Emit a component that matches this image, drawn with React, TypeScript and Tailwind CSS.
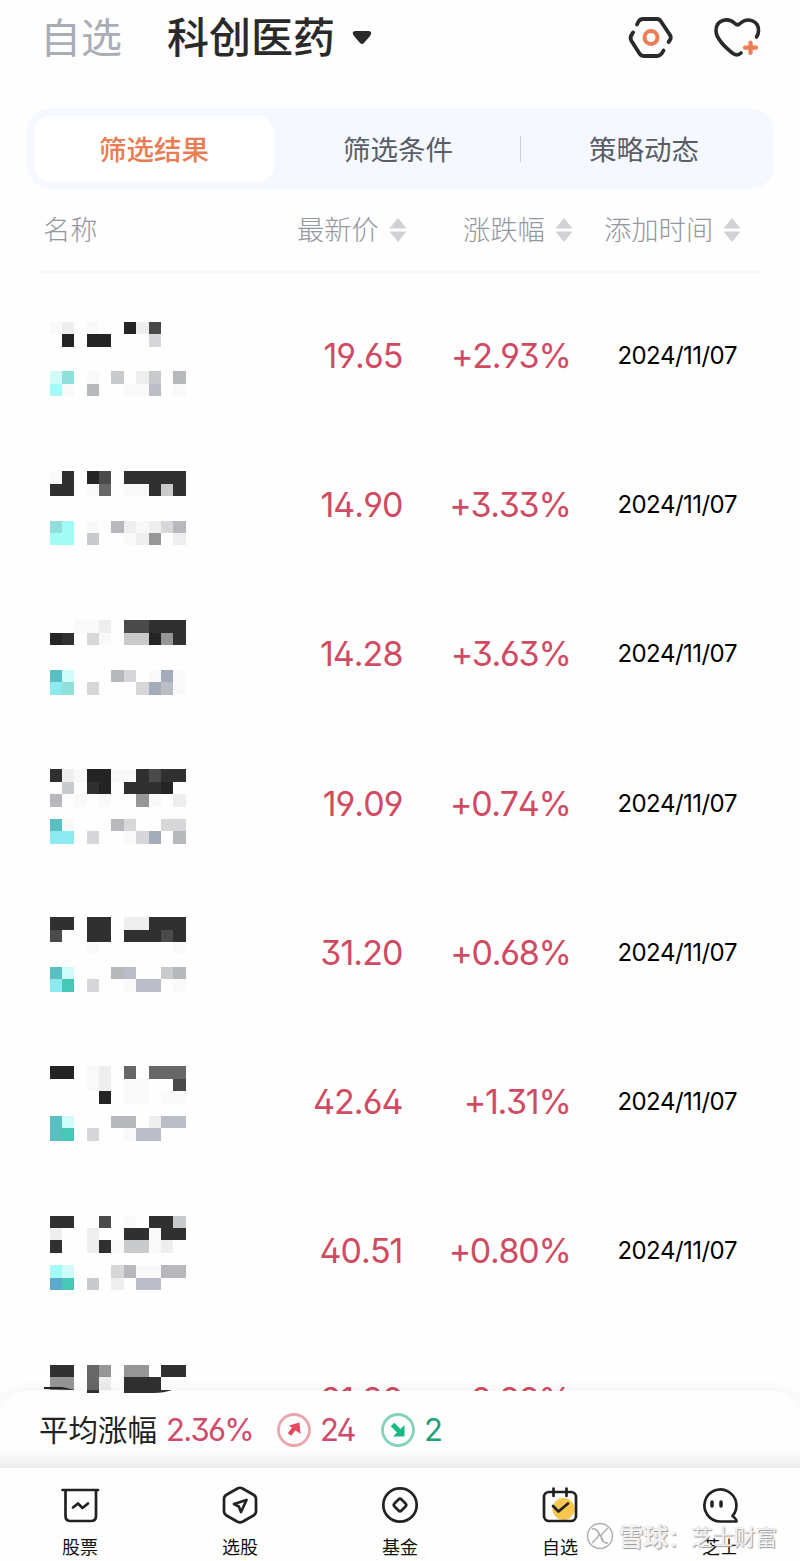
import type { ReactNode } from 'react';
import clsx from 'clsx';

interface Stock {
  price: string;
  change: string;
  date: string;
  mosaic: string[];
}

const shades: Record<string, string> = {
  k: 'bg-[#242424]',
  d: 'bg-[#303030]',
  g: 'bg-[#4a4a4a]',
  G: 'bg-[#676767]',
  m: 'bg-[#969696]',
  s: 'bg-[#b7b8bb]',
  S: 'bg-[#c9cacb]',
  l: 'bg-[#d7d7da]',
  w: 'bg-[#eeeeee]',
  f: 'bg-[#f9f9f9]',
  a: 'bg-[#a3fbf6]',
  A: 'bg-[#d0fbf8]',
  t: 'bg-[#59bfc0]',
  T: 'bg-[#8fdfda]',
  c: 'bg-[#8bebf0]',
  b: 'bg-[#a4abb9]',
  B: 'bg-[#bbbdc6]',
  v: 'bg-[#45c9b6]',
  u: 'bg-[#5cabcf]',
};

const stocks: Stock[] = [
  {
    price: '19.65',
    change: '+2.93%',
    date: '2024/11/07',
    mosaic: ['fw.f..kwg..', '.k.kk...l..', '...........', '...........', 'AT.f.S.wS.s', 'af.s..ffB.f'],
  },
  {
    price: '14.90',
    change: '+3.33%',
    date: '2024/11/07',
    mosaic: ['fd.kg.ddddd', 'dd.fG.ffdSd', '...........', '...........', 'Ta.f.swfwls', 'aa.S..fwm.w'],
  },
  {
    price: '14.28',
    change: '+3.63%',
    date: '2024/11/07',
    mosaic: ['..ffw.ggddd', 'kd.lf.SSkmd', '...........', '...........', 'tA...sl.fbf', 'cT.l...lbBf'],
  },
  {
    price: '19.09',
    change: '+0.74%',
    date: '2024/11/07',
    mosaic: ['dwfkkffdgdd', '.S.dk.dddk.', 's.f.f..mf.w', '...........', 'tf...sl..ll', 'cc.l..flb.s'],
  },
  {
    price: '31.20',
    change: '+0.68%',
    date: '2024/11/07',
    mosaic: ['dd.dd.wwddd', 'g..dd.dddgd', '...f......f', '...........', 'tA...sB..Ss', 'cv.l..fBB.f'],
  },
  {
    price: '42.64',
    change: '+1.31%',
    date: '2024/11/07',
    mosaic: ['kk.fw.G.GGG', '...fw.ff..g', '....k.ff.ff', '...........', 'tA...ss.wBB', 'tv.l..fBB..'],
  },
  {
    price: '40.51',
    change: '+0.80%',
    date: '2024/11/07',
    mosaic: ['dd..g.f.ddS', 'w..w..ddfdd', 'd..wdfSSfw.', '...........', 'aA...lsffss', 'uv.S.w.BB..'],
  },
  {
    price: '21.80',
    change: '+2.88%',
    date: '',
    mosaic: ['dd.Gm.mm.dd', 'mm.Gw.ddd..', '...d..ddd..', '...........', '...........', '...........'],
  },
];

function SortIcon() {
  return (
    <svg width="18" height="26" viewBox="0 0 18 26" className="shrink-0" fill="#d0d1d5">
      <path d="M9 1 17.5 11.5H.5z" />
      <path d="M9 25 .5 14.5h17z" />
    </svg>
  );
}

function Mosaic({ rows }: { rows: string[] }) {
  return (
    <div className="grid grid-cols-[repeat(11,12.4px)] auto-rows-[12.4px]">
      {rows.join('').split('').map((cell, i) => (
        <span key={i} className={shades[cell]} />
      ))}
    </div>
  );
}

function StockRow({ stock, lower }: { stock: Stock; lower: boolean }) {
  return (
    <div className="flex h-[149.2px] shrink-0 items-center pl-[49.5px] font-['Inter',sans-serif] [font-kerning:none]">
      <div className={clsx('w-[137px]', lower ? 'mt-[3px]' : 'mt-[6px]')}>
        <Mosaic rows={stock.mosaic} />
      </div>
      <div className="w-[216px] text-right text-[34px] leading-10 [font-weight:370] tracking-[-0.028em] text-[#d04b62] [font-feature-settings:'ss01','cv03','cv04']">
        {stock.price}
      </div>
      <div className="w-[168px] text-right text-[34px] leading-10 [font-weight:370] tracking-[-0.038em] text-[#d04b62] [font-feature-settings:'ss01','cv03','cv04']">
        {stock.change}
      </div>
      <div className="ml-[47px] text-2xl tracking-[-0.025em] text-black">{stock.date}</div>
    </div>
  );
}

function NavItem({ label, children }: { label: string; children: ReactNode }) {
  return (
    <button className="flex flex-1 flex-col items-center">
      <svg
        width="40"
        height="40"
        viewBox="0 0 40 40"
        fill="none"
        stroke="#222"
        strokeWidth="2.7"
        strokeLinecap="round"
        strokeLinejoin="round"
      >
        {children}
      </svg>
      <span className="mt-[8px] text-[18px] leading-[26px] text-[#111]">{label}</span>
    </button>
  );
}

export default function App() {
  return (
    <div className="relative flex h-[1561px] w-[800px] flex-col overflow-hidden bg-[#fefefe] font-['Noto_Sans_CJK_SC',sans-serif]">
      {/* Title bar */}
      <header className="flex h-[75px] shrink-0 items-center pr-[39px] pl-[40px]">
        <span className="mb-[5px] text-[41px] leading-none text-[#a9adb7]">自选</span>
        <span className="mb-[5px] ml-[45px] text-[42px] leading-none font-medium text-[#2a2a2a]">科创医药</span>
        <svg width="20" height="16" viewBox="0 0 20 16" className="ml-[17px]" fill="#2a2a2a">
          <path d="M3 1h14q4 1 1 5l-6 7q-2 2-4 0L2 6Q-1 2 3 1z" />
        </svg>
        <svg
          width="46"
          height="44"
          viewBox="0 0 46 44"
          className="mb-[2px] ml-auto"
          fill="none"
          stroke="#2a2a2a"
          strokeWidth="3.8"
          strokeLinecap="round"
          strokeLinejoin="round"
        >
          <path d="M9 9.5 10.5 6.5Q12 4 15 4H29Q31.5 4 33 6.5L42 20Q43.5 22.5 42 25L40.500 27" />
          <path d="M5 17.500 3 21Q2 23.500 3.500 26L11.500 38.500Q13 41 16 41H29Q33 41 35.500 35.500" />
          <circle cx="23" cy="22.500" r="6.500" stroke="#ec7d55" strokeWidth="4" />
        </svg>
        <svg
          width="48"
          height="44"
          viewBox="0 0 48 44"
          className="mb-[2px] ml-[39px]"
          fill="none"
          stroke="#2a2a2a"
          strokeWidth="3.600"
          strokeLinecap="round"
          strokeLinejoin="round"
        >
          <path d="M28 38Q24.500 41.500 20 38.500C12 32 3 24 3 15.500C3 4.500 15 2 22 8.500Q24.500 11 27 8.500C35 1.500 46 6 45.500 16Q45.500 19 43.500 22" />
          <path d="M37.500 27.500V38M32 32.700H43" stroke="#ec7d55" strokeWidth="4.200" />
        </svg>
      </header>

      {/* Tabs */}
      <div className="mt-[33px] mr-[26px] ml-[27px] flex h-[81px] shrink-0 items-center rounded-[24px] bg-[#f5f8fe] p-[7px] text-[27.500px] text-[#5a5d65]">
        <button className="h-[66px] w-[240px] rounded-2xl bg-white font-medium text-[#e97c53]">筛选结果</button>
        <button className="w-[246px] pl-[2px]">筛选条件</button>
        <span className="h-[26px] w-px bg-[#cdd0d8]" />
        <button className="flex-1">策略动态</button>
      </div>

      {/* Column headings */}
      <div className="mr-[40px] ml-[40px] flex h-[84px] shrink-0 items-center border-b-2 border-[#f7f7f8] pl-[3px] text-[27.300px] font-light text-[#94979e]">
        <span className="mb-[4px] w-[254px]">名称</span>
        <span className="flex w-[166px] items-center gap-[10px]">
          <span className="mb-[4px]">最新价</span>
          <SortIcon />
        </span>
        <span className="flex w-[141px] items-center gap-[10px]">
          <span className="mb-[4px]">涨跌幅</span>
          <SortIcon />
        </span>
        <span className="flex items-center gap-[10px]">
          <span className="mb-[4px]">添加时间</span>
          <SortIcon />
        </span>
      </div>

      <main className="mt-[8.5px] flex h-[1109.5px] shrink-0 flex-col overflow-hidden">
        {stocks.map((stock, i) => (
          <StockRow key={i} stock={stock} lower={i > 3} />
        ))}
      </main>

      {/* Average change */}
      <section className="flex h-[77px] shrink-0 items-center rounded-t-[24px] bg-gradient-to-b from-[#fefefe] from-75% to-[#eeeeee] pl-[39px] shadow-[0_-2px_14px_rgba(0,0,0,0.05)]">
        <span className="mb-[2px] text-[29.500px] leading-none text-[#222]">平均涨幅</span>
        <span className="ml-[9px] w-[101px] font-['Inter',sans-serif] text-[31px] leading-none [font-weight:370] tracking-[-0.055em] text-[#d04b6b] [font-feature-settings:'ss01','cv03','cv04'] [font-kerning:none]">
          2.36%
        </span>
        <svg width="34" height="34" viewBox="0 0 34 34" className="ml-[10px]">
          <circle cx="17" cy="17" r="15.500" fill="none" stroke="#eba5ad" strokeWidth="2.800" />
          <path d="m12.500 21.500 5-6.500" stroke="#e8495d" strokeWidth="4.500" />
          <path d="m12 12.500 10.500-3 1 11.500z" fill="#e8495d" />
        </svg>
        <span className="ml-[9px] w-[34px] font-['Inter',sans-serif] text-[31px] leading-none [font-weight:370] tracking-[-0.06em] text-[#d04b6b] [font-feature-settings:'ss01']">
          24
        </span>
        <svg width="34" height="34" viewBox="0 0 34 34" className="ml-[27px]">
          <circle cx="17" cy="17" r="15.500" fill="none" stroke="#84d3b5" strokeWidth="2.800" />
          <path d="m11.500 11.500 7 7" stroke="#18b982" strokeWidth="5" />
          <path d="M23.500 12v11.500H12z" fill="#18b982" />
        </svg>
        <span className="ml-[9px] font-['Inter',sans-serif] text-[31px] leading-none [font-weight:370] text-[#209f78]">2</span>
      </section>

      {/* Bottom navigation */}
      <nav className="flex h-[93px] shrink-0 bg-[#fefefe] pt-[17px]">
        <NavItem label="股票">
          <path d="M2.500 5H38M5.500 5V31Q5.500 36 10.500 36H31Q36 36 36 31V5M13 22.500 18 18.500 22.500 23 28 18.500" />
        </NavItem>
        <NavItem label="选股">
          <path d="M17.500 3.500Q20 2 22.500 3.500L33.500 9.700Q36 11 36 14V26Q36 29 33.500 30.500L22.500 36.700Q20 38 17.500 36.700L6.500 30.500Q4 29 4 26V14Q4 11 6.500 9.700z" />
          <path d="M14 19 26.500 15 21 27 18.800 21.500z" />
        </NavItem>
        <NavItem label="基金">
          <circle cx="20" cy="20" r="16.700" />
          <path d="m18.500 14.500-4 4q-1.500 1.500 0 3l4 4q1.500 1.500 3 0l4-4q1.500-1.500 0-3l-4-4q-1.500-1.500-3 0z" />
        </NavItem>
        <NavItem label="自选">
          <circle cx="23.500" cy="24" r="11" fill="#f9c64e" stroke="none" />
          <rect x="4" y="7" width="32" height="29" rx="5" />
          <path d="M13.500 3.500V11M26.500 3.500V11M13 21 18.500 26.500 28 18.500" />
        </NavItem>
        <NavItem label="芝士">
          <path d="M32.500 31A16 16 0 1 0 20 36.500H36.500Q37 34.500 32.500 31z" />
          <path d="M12 17V21M21 17V21" strokeWidth="3.500" />
        </NavItem>
      </nav>

      {/* Dark slivers left along the rounded edge of the summary bar */}
      <svg width="140" height="8" viewBox="0 0 140 8" className="absolute top-[1386px] left-[42px]">
        <path d="M2 1 20 1 33 4 20 3.500 2 3z" fill="#222" />
        <path d="M45 4h12v3H45zM82 4H130Q122 7 112 7H82z" fill="#303030" />
      </svg>

      {/* Watermark */}
      <div className="absolute top-[1521px] left-[586px] flex items-center whitespace-nowrap text-white/85 [text-shadow:1px_1px_1px_#999,0_0_1px_#bbb]">
        <svg width="30" height="30" viewBox="0 0 30 30" fill="none" stroke="#b0b0b0" strokeWidth="1.500">
          <circle cx="14" cy="15" r="12.500" />
          <path d="M6 8q4-1 6 3 2 3-1 6l-5 5M22 7l-6 6q-2 3 0 6 2 3 6 3M12 11l5 8" />
        </svg>
        <span className="ml-[3px] text-[24.500px] leading-[30px] font-bold">雪球</span>
        <span className="w-[23px] text-[22px] leading-[30px]">：</span>
        <span className="text-[21.500px] leading-[30px]">芝士财富</span>
      </div>
    </div>
  );
}
